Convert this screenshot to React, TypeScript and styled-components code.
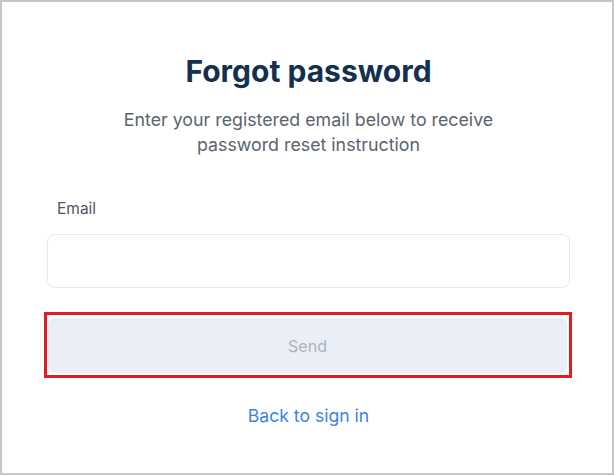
import React from 'react'
import styled, { createGlobalStyle } from 'styled-components'

const GlobalStyle = createGlobalStyle`
  html, body {
    margin: 0;
    padding: 0;
    background: #ffffff;
  }
  body {
    font-family: Inter, "Noto Sans", "Liberation Sans", sans-serif;
  }
  * {
    box-sizing: border-box;
  }
`

const Frame = styled.div`
  width: 614px;
  height: 475px;
  border: 2px solid #c6c6c6;
  background: #ffffff;
  display: flex;
  flex-direction: column;
  align-items: center;
  padding: 50px 42px 0 45px;
`

const Title = styled.h1`
  margin: 0;
  font-size: 30px;
  line-height: 38px;
  font-weight: 700;
  color: #14304f;
  letter-spacing: 0;
`

const Subtitle = styled.p`
  margin: 17px 0 0;
  font-size: 17.8px;
  line-height: 25px;
  color: #5b6370;
  text-align: center;
  max-width: 390px;
`

const Form = styled.form`
  width: 100%;
  margin-top: 42px;
  display: flex;
  flex-direction: column;
`

const Label = styled.label`
  font-size: 15.5px;
  line-height: 20px;
  color: #4f5764;
  padding-left: 10px;
`

const Input = styled.input`
  margin-top: 15px;
  height: 54px;
  width: 523px;
  border: 1px solid #e5e9f1;
  border-radius: 8px;
  background: #ffffff;
  outline: none;
  padding: 0 16px;
  font-size: 16px;
  font-family: inherit;
`

const Highlight = styled.div`
  margin-top: 24px;
  margin-left: -3px;
  width: 528px;
  border: 3px solid #e21c23;
  padding: 3px 2px 2px 1px;
`

const SendButton = styled.button`
  width: 100%;
  height: 55px;
  border: none;
  border-radius: 6px;
  background: #eaeef7;
  color: #adb3bd;
  font-size: 16px;
  font-family: inherit;
  cursor: not-allowed;
`

const BackLink = styled.a`
  margin-top: 26px;
  font-size: 17.6px;
  line-height: 24px;
  color: #3d82e6;
  text-decoration: none;
  align-self: center;
  cursor: pointer;
`

export default function App() {
  return (
    <>
      <GlobalStyle />
      <Frame>
        <Title>Forgot password</Title>
        <Subtitle>Enter your registered email below to receive password reset instruction</Subtitle>
        <Form onSubmit={(e) => e.preventDefault()}>
          <Label htmlFor="email">Email</Label>
          <Input id="email" type="email" />
          <Highlight>
            <SendButton type="submit" disabled>
              Send
            </SendButton>
          </Highlight>
          <BackLink>Back to sign in</BackLink>
        </Form>
      </Frame>
    </>
  )
}
